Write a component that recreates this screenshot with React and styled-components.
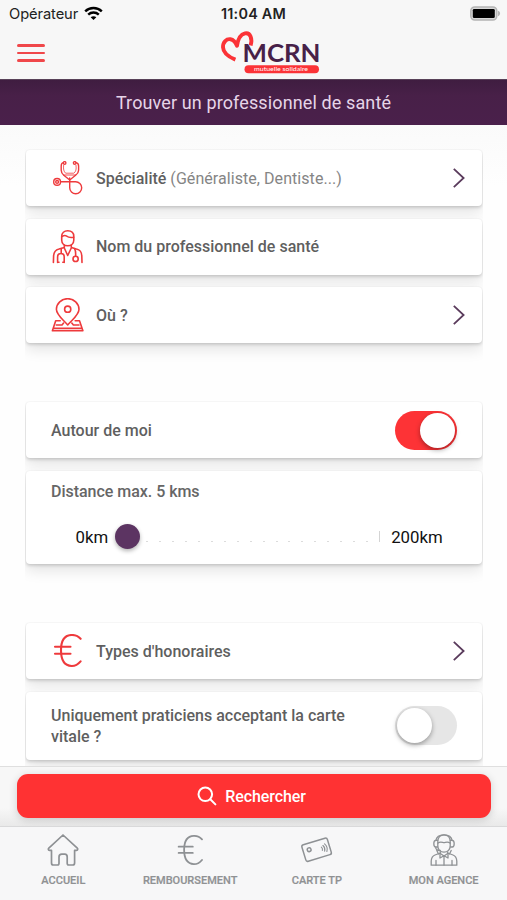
import React, { useState } from 'react';
import styled, { createGlobalStyle } from 'styled-components';

const GlobalStyle = createGlobalStyle`
  * {
    box-sizing: border-box;
  }
  body {
    margin: 0;
    background: #fefefe;
    font-family: Roboto, "Liberation Sans", sans-serif;
    overflow: hidden;
  }
  button {
    font-family: inherit;
    border: none;
    padding: 0;
  }
`;

const Screen = styled.div`
  width: 507px;
  height: 900px;
  display: flex;
  flex-direction: column;
  overflow: hidden;
`;

const StatusBar = styled.div`
  height: 27px;
  flex: none;
  display: grid;
  grid-template-columns: 1fr auto 1fr;
  align-items: center;
  padding: 0 6px 0 9px;
  background: #f7f7f7;
  font-family: Inter, sans-serif;
  color: #222;
`;

const Carrier = styled.div`
  display: flex;
  align-items: center;
  gap: 6px;
  font-size: 14.7px;
  letter-spacing: -0.1px;
`;

const Clock = styled.div`
  margin-left: -3px;
  font-size: 14.4px;
  font-weight: 600;
  letter-spacing: 0.25px;
`;

const BatterySlot = styled.div`
  display: flex;
  justify-content: flex-end;
`;

const Header = styled.header`
  height: 52px;
  flex: none;
  display: grid;
  grid-template-columns: 203px 104px;
  padding: 0 17px;
  background: #f7f7f7;
`;

const MenuButton = styled.button`
  width: 28px;
  height: 18px;
  margin-top: 17px;
  background: none;
  display: flex;
  flex-direction: column;
  justify-content: space-between;
`;

const MenuLine = styled.span`
  width: 28px;
  height: 2.6px;
  border-radius: 2px;
  background: #f0474a;
`;

const Title = styled.h1`
  height: 46px;
  flex: none;
  margin: 0;
  display: flex;
  align-items: center;
  justify-content: center;
  background: linear-gradient(#3f1d40, #482048 35%, #4a204b);
  border-top: 1px solid #584158;
  color: #e6d5e8;
  font-size: 18px;
  font-weight: 400;
  letter-spacing: 0.12px;
`;

const Content = styled.main`
  flex: 1;
  min-height: 0;
  overflow: hidden;
  display: flex;
  flex-direction: column;
  align-items: center;
  padding-top: 24px;
  background: linear-gradient(#fafafa, #fefefe 60px);
`;

const Group = styled.section`
  width: 458px;
  flex: none;
  display: flex;
  flex-direction: column;
  gap: 12.5px;
  padding: 1px 1px 24px;
  margin-bottom: ${props => props.$space || 0}px;
  overflow: hidden;
`;

const Card = styled.div`
  height: ${props => props.$height || 56}px;
  flex: none;
  display: flex;
  flex-direction: ${props => (props.$column ? 'column' : 'row')};
  align-items: ${props => (props.$column ? 'stretch' : 'center')};
  padding: 0 17px 0 25.5px;
  background: #fff;
  border-radius: 4px;
  box-shadow:
    0 0 2px rgba(0, 0, 0, 0.07),
    0 2px 3px rgba(0, 0, 0, 0.13),
    0 7px 14px rgba(0, 0, 0, 0.1);
`;

const IconSlot = styled.div`
  width: 34px;
  height: 34px;
  margin-right: 11px;
  flex: none;
  display: flex;
  color: #ee3a3c;
`;

const Label = styled.div`
  flex: 1;
  color: #5f5f5f;
  font-size: 16px;
  font-weight: 500;
  line-height: 21px;
`;

const Hint = styled.span`
  color: #858585;
  font-weight: 400;
  letter-spacing: 0.06px;
`;

const Toggle = styled.button`
  width: 62px;
  height: 39px;
  margin-right: 8px;
  padding: 2px;
  flex: none;
  display: flex;
  align-items: center;
  justify-content: ${props => (props.$on ? 'flex-end' : 'flex-start')};
  border-radius: 20px;
  background: ${props => (props.$on ? '#fd3336' : '#e6e6e6')};
`;

const Thumb = styled.span`
  width: 35px;
  height: 35px;
  border-radius: 50%;
  background: #fff;
  box-shadow: 0 2px 5px rgba(0, 0, 0, 0.35);
`;

const DistanceLabel = styled.div`
  margin-top: 10px;
  color: #666;
  font-size: 16px;
  font-weight: 500;
  line-height: 21px;
  letter-spacing: -0.03px;
`;

const Range = styled.div`
  display: flex;
  align-items: center;
  height: 26px;
  margin-top: 22px;
  padding-left: 24.5px;
  font-size: 16.8px;
  color: #111;
`;

const Knob = styled.span`
  width: 25px;
  height: 25px;
  margin: 0 6.5px;
  border-radius: 50%;
  background: #5c3462;
  box-shadow: 0 2px 4px rgba(0, 0, 0, 0.3);
`;

const Track = styled.div`
  width: 234px;
  height: 11px;
  margin-right: 11px;
  display: flex;
  align-items: flex-end;
  justify-content: space-between;
`;

const Tick = styled.span`
  width: ${props => (props.$last ? 1 : 2)}px;
  height: ${props => (props.$last ? 11 : 1)}px;
  background: ${props => (props.$last ? '#d4d4d4' : '#dcdcdc')};
`;

const SearchBar = styled.div`
  height: 60px;
  flex: none;
  padding: 7px 16px 0 17px;
  background: linear-gradient(#f7f7f7 70%, #e9e9e9);
  border-top: 1px solid #dfdfdf;
`;

const SearchButton = styled.button`
  width: 100%;
  height: 44px;
  display: flex;
  align-items: center;
  justify-content: center;
  gap: 8px;
  padding-right: 5px;
  border-radius: 11px;
  background: #ff3233;
  box-shadow: 0 2px 8px rgba(0, 0, 0, 0.16);
  color: #fff;
  font-size: 16px;
  font-weight: 500;
  letter-spacing: -0.08px;
`;

const TabBar = styled.nav`
  height: 74px;
  flex: none;
  display: grid;
  grid-template-columns: repeat(4, 1fr);
  background: #f7f7f8;
  border-top: 1px solid #d9d9da;
`;

const Tab = styled.a`
  display: flex;
  flex-direction: column;
  align-items: center;
  padding-top: 6px;
  color: #8e9194;
  font-size: 11px;
  font-weight: 500;
`;

const TabIcon = styled.span`
  height: 34px;
  display: flex;
  align-items: center;
`;

const TabLabel = styled.span`
  margin-top: 7px;
  line-height: 14px;
  color: #8f9193;
  -webkit-text-stroke: 0.2px #8f9193;
`;

const Icon = ({ children, size = 34, weight = 1.5 }) => (
  <svg
    width={size}
    height={size}
    viewBox="0 0 34 34"
    fill="none"
    stroke="currentColor"
    strokeWidth={weight}
    strokeLinecap="round"
    strokeLinejoin="round"
  >
    {children}
  </svg>
);

const Stethoscope = () => (
  <Icon weight={1.4}>
    <circle cx="13.6" cy="1.9" r="1.3" />
    <circle cx="23.7" cy="1.9" r="1.3" />
    <path d="M12.3 1.6C10.6 2 10.2 3 10.2 5V9.2C10.2 11.5 11.2 12.8 12.8 14.2L18.7 19L24.6 14.2C26.4 12.8 27.6 11.5 27.6 9.2V5C27.6 3 27 2 25.1 1.6" />
    <path d="M12.6 4.4C12.2 8.5 12.8 10.4 14.6 12.2H22.8C25 10.4 25.5 8.5 25 4.4" strokeWidth="0.8" />
    <path d="M12.8 14H24.6" strokeWidth="0.9" />
    <circle cx="6.1" cy="20.9" r="3.4" />
    <circle cx="6.1" cy="20.9" r="1.4" />
    <path d="M9.6 20.8H24.6A6 6 0 1 1 18.7 26.8V17" />
  </Icon>
);

const Doctor = () => (
  <Icon weight={1.6}>
    <path d="M10.7 8.5V6.5C10.7 2.8 13.2.8 16.7.8S22.8 2.8 22.8 6.5V10C22.8 13.4 20.2 15.8 16.7 15.8S10.7 13.4 10.7 10Z" />
    <path d="M10.8 6.6C12.8 5.4 14 5 15.2 5.8C17.4 7.4 20 7.8 22.6 7.2" />
    <path d="M13.3 15.2V18L16.7 25.5L20.3 18V15.2M13.3 17.5L8 19C4 20 2.8 22 2.6 26L2.4 32.5M20.3 17.5L25.4 19C29.6 20 30.6 22 30.8 26L31 32.5" />
    <path d="M10.2 18.5V23.5M6.6 32.5V27C6.6 22.4 13.2 22.4 13.2 27V32.5M6.6 32.2H8M11.8 32.2H13.2M23.6 18.6C25 21 24.7 23 24.6 26.3" />
    <circle cx="24.6" cy="28.9" r="2.6" />
  </Icon>
);

const Pin = () => (
  <Icon weight={1.6}>
    <path d="M16.7 27C12 21.4 5.4 17 5.4 11.3A11.3 10.6 0 0 1 28 11.3C28 17 21.4 21.4 16.7 27Z" />
    <circle cx="16.7" cy="11.2" r="3.1" />
    <path d="M9.2 22.7H4.7L1.4 32.8H31.9L28.5 22.7H24.2M2.2 30.4H31.1" />
    <path d="M5.3 27H11L12.6 25M20.8 25L22.4 27H28" />
  </Icon>
);

const Euro = ({ size, weight = 2.1 }) => (
  <Icon size={size} weight={weight}>
    <path d="M29.6 4.8C27 1.9 23.8.9 20.6 1C13.6 1.2 10 7 10 16.3S13.6 31.7 20.6 32C24 32.1 27 30.5 29.6 27.4" />
    <path d="M4 12.8H19.5M4 19.7H19.5" />
  </Icon>
);

const Chevron = () => (
  <svg width="12" height="20" viewBox="0 0 12 20" fill="none" stroke="#5a3b5c" strokeWidth="1.8">
    <path d="M0.8 0.8L10.6 10L0.8 19.2" />
  </svg>
);

const Home = () => (
  <Icon weight={1.7}>
    <path d="M17 2L31.3 15.2C32.3 16.2 31.5 17.4 30.3 17.4H28.6V30C28.6 31.3 28 32 26.7 32H22.8C21.7 32 21.2 31.4 21.2 30.3V24C21.2 22 20.3 21.2 18.8 21.2H15.8C14 21.2 13 22 13 24V30.3C13 31.4 12.4 32 11.4 32H7.3C6 32 5.5 31.3 5.5 30V17.4H3.8C2.4 17.4 1.8 16.2 2.8 15.2Z" />
  </Icon>
);

const TpCard = () => (
  <Icon weight={1.5}>
    <g transform="rotate(-17 17 17)">
      <rect x="3.4" y="8" width="26.6" height="17.2" rx="2" />
      <circle cx="9.6" cy="14.4" r="1.9" />
      <path d="M22 15.6C22.8 16.8 22.8 17.8 22 19M24 14.4C25.4 16.6 25.4 18 24 20.3M26 13.3C27.8 16 27.8 18.6 26 21.3" strokeWidth="1.1" />
    </g>
  </Icon>
);

const Agent = () => (
  <Icon weight={1.3}>
    <path d="M10.8 13V8.8C10.8 4.5 13.2 1.8 17 1.8S23.2 4.5 23.2 8.8V13C23.2 16.3 20.8 19.2 17 19.2S10.8 16.3 10.8 13Z" />
    <path d="M8.8 7.5C9.5 3.6 12.4 1.8 17 1.8S24.5 3.6 25.2 7.5M11 10C13.5 8 15.6 9.6 17 9.6S20.5 8 23 10" />
    <path d="M10.5 7.4H8.7C6.2 7.6 6.2 13.8 8.7 14H10.5M23.5 7.4H25.3C27.8 7.6 27.8 13.8 25.3 14H23.5M8.5 14C8.8 16.8 10.8 17.8 13.3 17.5" />
    <path d="M13.3 18.8V20.5L17 23L20.7 20.5V18.8M13.3 20L8 22C5.2 23 4.4 25 4.2 28V32.2H29.8V28C29.6 25 28.8 23 26 22L20.7 20" />
    <path d="M13 20.5V25L17 22.8L21 25V20.5M17 24V32M9 32V27.5M25 32V27.5M11.5 21L9.8 17.5M22.5 21L24.2 17.5" />
  </Icon>
);

const Wifi = () => (
  <svg width="19" height="15" viewBox="0 0 19 15" fill="none" stroke="#000" strokeWidth="2.4">
    <path d="M1.2 5.3C5.8.9 13.2.9 17.8 5.3" />
    <path d="M4.2 8.6C7.2 5.8 11.8 5.8 14.8 8.6" />
    <path d="M9.5 14L6.7 11.2C8.2 9.8 10.8 9.8 12.3 11.2Z" fill="#000" stroke="none" />
  </svg>
);

const Battery = () => (
  <svg width="31" height="15" viewBox="0 0 31 15">
    <rect x="0.8" y="0.9" width="26" height="13.2" rx="4" fill="#d8d8d8" stroke="#b4b4b4" strokeWidth="1.5" />
    <rect x="2.8" y="2.9" width="22" height="9.2" rx="1.4" fill="#000" />
    <path d="M28 4.8C30.8 5.6 30.8 9.4 28 10.2Z" fill="#b4b4b4" />
  </svg>
);

const Logo = () => (
  <svg width="104" height="52" viewBox="0 0 104 52">
    <path
      d="M15.4 32.6C8.5 29.8 3.2 25.6 3 20.2C2.8 15 6.6 11.6 10.4 12.2C13.6 12.7 15.6 15.2 17 18.8C17.8 13 20 7.4 25 6.3C30.4 5.2 32.6 11.6 30.6 18.5"
      fill="none"
      stroke="#fb3337"
      strokeWidth="3.9"
      strokeLinejoin="round"
    />
    <text
      x="22.5"
      y="35"
      textLength="78"
      lengthAdjust="spacingAndGlyphs"
      fontFamily="Lato, sans-serif"
      fontSize="25.5"
      fontWeight="700"
      fill="#472148"
    >
      MCRN
    </text>
    <rect x="24.5" y="38.2" width="74.5" height="8" rx="4" fill="#fb3337" />
    <text
      x="34"
      y="44.4"
      textLength="54"
      lengthAdjust="spacingAndGlyphs"
      fontFamily="Lato, sans-serif"
      fontSize="6.2"
      fill="#fff"
    >
      mutuelle solidaire
    </text>
  </svg>
);

const SearchIcon = () => (
  <svg width="20" height="20" viewBox="0 0 20 20" fill="none" stroke="#fff" strokeWidth="2" strokeLinecap="round">
    <circle cx="8.3" cy="8.3" r="6.8" />
    <path d="M13.3 13.3L18.4 18.4" />
  </svg>
);

const TABS = [
  { label: 'ACCUEIL', icon: <Home /> },
  { label: 'REMBOURSEMENT', icon: <Euro size={31} weight={2} /> },
  { label: 'CARTE TP', icon: <TpCard /> },
  { label: 'MON AGENCE', icon: <Agent /> },
];

const TICKS = Array.from({ length: 19 }, (_, i) => i);

export default function App() {
  const [nearMe, setNearMe] = useState(true);
  const [vitale, setVitale] = useState(false);

  return (
    <Screen>
      <GlobalStyle />
      <StatusBar>
        <Carrier>Opérateur <Wifi /></Carrier>
        <Clock>11:04 AM</Clock>
        <BatterySlot><Battery /></BatterySlot>
      </StatusBar>
      <Header>
        <MenuButton aria-label="Menu">
          <MenuLine />
          <MenuLine />
          <MenuLine />
        </MenuButton>
        <Logo />
      </Header>
      <Title>Trouver un professionnel de santé</Title>

      <Content>
        <Group $space={34}>
          <Card>
            <IconSlot><Stethoscope /></IconSlot>
            <Label>Spécialité <Hint>(Généraliste, Dentiste...)</Hint></Label>
            <Chevron />
          </Card>
          <Card>
            <IconSlot><Doctor /></IconSlot>
            <Label>Nom du professionnel de santé</Label>
          </Card>
          <Card>
            <IconSlot><Pin /></IconSlot>
            <Label>Où ?</Label>
            <Chevron />
          </Card>
        </Group>

        <Group $space={34}>
          <Card>
            <Label>Autour de moi</Label>
            <Toggle $on={nearMe} onClick={() => setNearMe(!nearMe)}><Thumb /></Toggle>
          </Card>
          <Card $column $height={93.5}>
            <DistanceLabel>Distance max. 5 kms</DistanceLabel>
            <Range>
              0km
              <Knob />
              <Track>
                {TICKS.map(i => <Tick key={i} $last={i === TICKS.length - 1} />)}
              </Track>
              200km
            </Range>
          </Card>
        </Group>

        <Group>
          <Card>
            <IconSlot><Euro /></IconSlot>
            <Label>Types d'honoraires</Label>
            <Chevron />
          </Card>
          <Card $height={68}>
            <Label>
              Uniquement praticiens acceptant la carte
              <br />
              vitale ?
            </Label>
            <Toggle $on={vitale} onClick={() => setVitale(!vitale)}><Thumb /></Toggle>
          </Card>
        </Group>
      </Content>

      <SearchBar>
        <SearchButton><SearchIcon /> Rechercher</SearchButton>
      </SearchBar>
      <TabBar>
        {TABS.map(tab => (
          <Tab key={tab.label}>
            <TabIcon>{tab.icon}</TabIcon>
            <TabLabel>{tab.label}</TabLabel>
          </Tab>
        ))}
      </TabBar>
    </Screen>
  );
}
